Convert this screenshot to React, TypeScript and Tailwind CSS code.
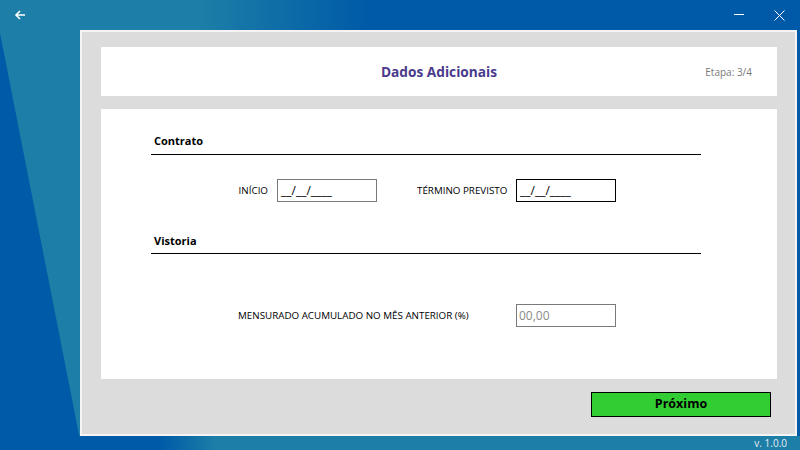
import React from 'react';

const font = "font-['Open_Sans',sans-serif]";

const Background: React.FC = () => (
  <svg className="absolute inset-0" width="800" height="450" viewBox="0 0 800 450">
    <defs>
      <linearGradient id="topGrad" x1="0" y1="0" x2="800" y2="0" gradientUnits="userSpaceOnUse">
        <stop offset="0.25" stopColor="#1d7ea7" />
        <stop offset="0.46" stopColor="#005aa7" />
      </linearGradient>
      <linearGradient id="botGrad" x1="0" y1="0" x2="800" y2="0" gradientUnits="userSpaceOnUse">
        <stop offset="0.2" stopColor="#005aa7" />
        <stop offset="0.27" stopColor="#1d7ea7" />
      </linearGradient>
    </defs>
    <rect x="0" y="0" width="800" height="450" fill="url(#topGrad)" />
    <polygon points="0,33 82,450 0,450" fill="#005aa7" />
    <rect x="0" y="436" width="800" height="14" fill="url(#botGrad)" />
  </svg>
);

const SectionTitle: React.FC<{ label: string; pb: string }> = ({ label, pb }) => (
  <div className={`border-b border-black pl-[3px] ${pb}`}>
    <span className="block text-[11px] font-bold leading-[16px] text-black">{label}</span>
  </div>
);

const App: React.FC = () => {
  return (
    <div className={`relative w-[800px] h-[450px] overflow-hidden ${font}`}>
      <Background />

      <div className="relative flex flex-col h-full">
        {/* window bar */}
        <div className="h-[30px] flex items-start">
          <div className="ml-[14px] mt-[9px]">
            <svg width="12" height="12" viewBox="0 0 12 12">
              <path d="M11 6H2M6 2L2 6l4 4" fill="none" stroke="#ffffff" strokeWidth="1.6" />
            </svg>
          </div>
          <div className="ml-auto flex items-start">
            <div className="mt-[14px] w-[10px] h-px bg-white" />
            <div className="ml-[30px] mr-[15px] mt-[10px]">
              <svg width="11" height="11" viewBox="0 0 11 11">
                <path d="M0.5 0.5l10 10M10.5 0.5l-10 10" stroke="#ffffff" strokeWidth="1" />
              </svg>
            </div>
          </div>
        </div>

        {/* main panel */}
        <div className="ml-[80px] w-[717px] h-[406px] border-2 border-[#f4f4f4] bg-[#dcdcdc] pl-[19px] pr-[16px] pt-[15px] flex flex-col">
          <div className="w-[676px] h-[49px] bg-white grid grid-cols-[1fr_auto_1fr] items-center">
            <div />
            <span className="text-[13.7px] font-bold text-[#4a3a8c] leading-none">Dados Adicionais</span>
            <span className="justify-self-end pr-[25px] pt-[2px] text-[10px] text-[#7a7a7a]">Etapa: 3/4</span>
          </div>

          <div className="mt-[13px] w-[676px] h-[270px] bg-white pt-[24px]">
            <div className="ml-[50px] w-[550px] flex flex-col">
              <SectionTitle label="Contrato" pb="pb-[5px]" />

              <div className="mt-[24px] h-[23px] flex items-center text-[9.8px] text-black">
                <span className="w-[117px] pt-[2px] text-right">INÍCIO</span>
                <div className="ml-[9px] w-[100px] h-[23px] border border-[#7a7a7a] px-[3px] pt-[1px] flex items-center text-[12px]">
                  __/__/____
                </div>
                <span className="ml-[40px] w-[99px] pt-[2px]">TÉRMINO PREVISTO</span>
                <div className="w-[100px] h-[23px] border border-black px-[3px] pt-[1px] flex items-center text-[12px]">
                  __/__/____
                </div>
              </div>

              <div className="mt-[31px]">
                <SectionTitle label="Vistoria" pb="pb-[4px]" />
              </div>

              <div className="mt-[50px] h-[23px] flex items-center text-[9.8px] text-black">
                <span className="ml-[87px] w-[278px] pt-[2px]">MENSURADO ACUMULADO NO MÊS ANTERIOR (%)</span>
                <div className="w-[100px] h-[23px] border border-[#7a7a7a] px-[2px] flex items-center text-[12px] text-[#8a8a8a]">
                  00,00
                </div>
              </div>
            </div>
          </div>

          <div className="mt-[13px] w-[676px] flex justify-end pr-[6px]">
            <button className="w-[180px] h-[25px] bg-[#32cd32] border border-black text-[12.5px] font-bold text-black flex items-center justify-center">
              Próximo
            </button>
          </div>
        </div>

        {/* footer */}
        <div className="h-[14px] flex items-center justify-end pr-[13px]">
          <span className="text-[10px] text-[#e8eef4] leading-none">v. 1.0.0</span>
        </div>
      </div>
    </div>
  );
};

export default App;
